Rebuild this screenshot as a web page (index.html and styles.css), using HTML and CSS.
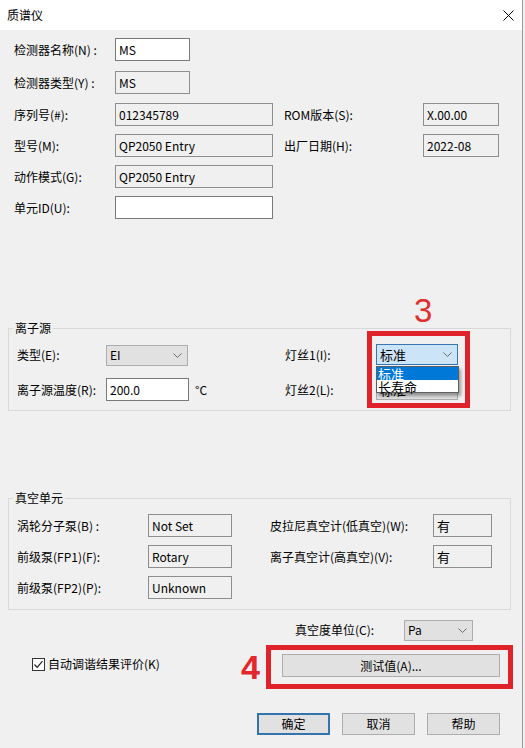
FILE: index.html
```html
<!DOCTYPE html>
<html lang="zh-CN">
<head>
<meta charset="utf-8">
<title>质谱仪</title>
<link rel="stylesheet" href="styles.css">
</head>
<body>
<div class="window">
  <div class="titlebar">
    <span class="title">质谱仪</span>
    <svg class="close" width="11" height="11" viewBox="0 0 11 11"><path d="M0.5 0.5L10.5 10.5M10.5 0.5L0.5 10.5" stroke="#000" stroke-width="1" fill="none"/></svg>
  </div>

  <div class="info">
    <div class="row r1">
      <span class="lbl">检测器名称(N) :</span>
      <span class="box edit w75">MS</span>
    </div>
    <div class="row r2">
      <span class="lbl">检测器类型(Y) :</span>
      <span class="box w75">MS</span>
    </div>
    <div class="row r3">
      <span class="lbl">序列号(#):</span>
      <span class="box w158">012345789</span>
      <span class="lbl2">ROM版本(S):</span>
      <span class="box w76">X.00.00</span>
    </div>
    <div class="row r4">
      <span class="lbl">型号(M):</span>
      <span class="box w158">QP2050 Entry</span>
      <span class="lbl2">出厂日期(H):</span>
      <span class="box w76">2022-08</span>
    </div>
    <div class="row r5">
      <span class="lbl">动作模式(G):</span>
      <span class="box w158">QP2050 Entry</span>
    </div>
    <div class="row r6">
      <span class="lbl">单元ID(U):</span>
      <span class="box edit w158"></span>
    </div>
  </div>

  <fieldset class="group ion">
    <legend>离子源</legend>
    <div class="ion-grid">
      <span>类型(E):</span>
      <div class="combo w82">
        <span>EI</span>
        <svg class="chev" width="9" height="5" viewBox="0 0 9 5"><path d="M0.5 0.5L4.5 4.5L8.5 0.5" stroke="#6b6b6b" fill="none"/></svg>
      </div>
      <span></span>
      <span>灯丝1(I):</span>
      <div class="combo-wrap">
        <div class="combo focus">
          <span class="big">标准</span>
          <svg class="chev" width="9" height="5" viewBox="0 0 9 5"><path d="M0.5 0.5L4.5 4.5L8.5 0.5" stroke="#6b6b6b" fill="none"/></svg>
        </div>
        <ul class="dropdown">
          <li class="sel">标准</li>
          <li>长寿命</li>
        </ul>
      </div>

      <span>离子源温度(R):</span>
      <span class="box edit w83">200.0</span>
      <span class="unit">°C</span>
      <span>灯丝2(L):</span>
      <div class="combo">
        <span class="big">标准</span>
        <svg class="chev" width="9" height="5" viewBox="0 0 9 5"><path d="M0.5 0.5L4.5 4.5L8.5 0.5" stroke="#6b6b6b" fill="none"/></svg>
      </div>
    </div>
  </fieldset>

  <fieldset class="group vac">
    <legend>真空单元</legend>
    <div class="vac-grid">
      <span>涡轮分子泵(B) :</span>
      <span class="box">Not Set</span>
      <span></span>
      <span>皮拉尼真空计(低真空)(W):</span>
      <span class="box big">有</span>

      <span>前级泵(FP1)(F):</span>
      <span class="box">Rotary</span>
      <span></span>
      <span>离子真空计(高真空)(V):</span>
      <span class="box big">有</span>

      <span>前级泵(FP2)(P):</span>
      <span class="box">Unknown</span>
    </div>
  </fieldset>

  <div class="unit-row">
    <span class="unit-lbl">真空度单位(C):</span>
    <div class="combo w69">
      <span>Pa</span>
      <svg class="chev" width="9" height="5" viewBox="0 0 9 5"><path d="M0.5 0.5L4.5 4.5L8.5 0.5" stroke="#6b6b6b" fill="none"/></svg>
    </div>
  </div>

  <div class="action-row">
    <label class="checkline">
      <span class="check"><svg width="11" height="11" viewBox="0 0 11 11"><path d="M1.5 5.5L4.2 8.3L9.5 2.2" stroke="#222" stroke-width="1.2" fill="none"/></svg></span>
      <span>自动调谐结果评价(K)</span>
    </label>
    <span class="btn wide">测试值(A)...</span>
  </div>

  <div class="button-row">
    <span class="btn default">确定</span>
    <span class="btn">取消</span>
    <span class="btn">帮助</span>
  </div>

  <div class="mark mark3"></div>
  <span class="num num3">3</span>
  <div class="mark mark4"></div>
  <span class="num num4">4</span>
</div>
</body>
</html>
```

FILE: styles.css
```css
* { box-sizing: border-box; }

html, body {
  margin: 0;
  background: #f0f0f0;
}

body {
  font-family: "Noto Sans CJK SC", "Microsoft YaHei", sans-serif;
  font-size: 12px;
  line-height: 16px;
  color: #000;
}

.window {
  position: relative;
  width: 523px;
  height: 748px;
  background: #f0f0f0;
  border-right: 1px solid #9a9a9a;
  overflow: hidden;
}

.titlebar {
  height: 30px;
  background: #fff;
  display: flex;
  align-items: center;
  justify-content: space-between;
  padding: 0 8px 0 7px;
}

.close { display: block; margin-top: 1px; }

/* top info rows */
.info {
  display: flex;
  flex-direction: column;
  padding-left: 14px;
}
.row {
  display: flex;
  align-items: center;
  height: 23px;
  white-space: nowrap;
}
.r1 { margin-top: 8px; }
.r2 { margin-top: 10px; }
.r3 { margin-top: 9px; }
.r4, .r5, .r6 { margin-top: 8px; }

.lbl { width: 101px; flex: none; }
.lbl2 { width: 150px; flex: none; padding-left: 11px; }

.box {
  display: block;
  height: 23px;
  border: 1px solid #8e8e8e;
  background: #f0f0f0;
  padding: 0 3px;
  line-height: 21px;
  white-space: nowrap;
  overflow: hidden;
}
.box.edit { background: #fff; border-color: #7a7a7a; }
.w75 { width: 75px; }
.w76 { width: 76px; }
.w158 { width: 158px; }
.w83 { width: 83px; }
.w82 { width: 82px; }
.w69 { width: 69px; }
.big { font-size: 13px; }

/* group boxes */
.group {
  margin: 0 11px 0 8px;
  border: 1px solid #d9d9d9;
  padding: 8px 8px 9px 8px;
  min-width: 0;
}
.group legend {
  padding: 0 2px;
  margin-left: -4px;
  line-height: 16px;
}
.ion { margin-top: 101px; }
.vac { margin-top: 79px; padding-bottom: 10px; }

.ion-grid {
  display: grid;
  grid-template-columns: 89px 82px 97px 91px 82px;
  grid-template-rows: 22px 23px;
  row-gap: 12px;
  align-items: center;
  white-space: nowrap;
}
.unit { padding-left: 7px; }

.combo {
  height: 21px;
  border: 1px solid #adadad;
  background: #e1e1e1;
  display: flex;
  align-items: center;
  justify-content: space-between;
  padding: 0 5px 0 3px;
  white-space: nowrap;
}
.combo.focus {
  background: #cce4f7;
  border-color: #3676b3;
}
.combo-wrap {
  position: relative;
  height: 21px;
  align-self: start;
}
.chev { display: block; flex: none; }

.dropdown {
  position: absolute;
  left: 0;
  top: 22px;
  width: 83px;
  margin: 0;
  padding: 0;
  list-style: none;
  background: #fff;
  border: 1px solid #5f5f5f;
  box-shadow: 2px 3px 3px rgba(0, 0, 0, 0.35);
  font-size: 13px;
  line-height: 13px;
  z-index: 2;
}
.dropdown li { height: 13px; padding-left: 1px; white-space: nowrap; }
.dropdown li + li { height: 12px; }
.dropdown li.sel { background: #0078d7; color: #fff; }

.vac-grid {
  display: grid;
  grid-template-columns: 131px 84px 38px 163px 59px;
  grid-template-rows: 23px 23px 23px;
  row-gap: 8px;
  align-items: center;
  white-space: nowrap;
}

/* bottom area */
.unit-row {
  display: flex;
  align-items: center;
  height: 22px;
  margin-top: 9px;
  padding-left: 295px;
}
.unit-lbl { width: 109px; flex: none; }

.action-row {
  display: flex;
  align-items: center;
  height: 23px;
  margin-top: 13px;
  padding-left: 32px;
}
.checkline {
  width: 250px;
  display: flex;
  align-items: center;
  gap: 3px;
  margin-top: -3px;
}
.check {
  width: 13px;
  height: 13px;
  border: 1px solid #333;
  background: #fff;
  display: flex;
  align-items: center;
  justify-content: center;
}
.check svg { display: block; }

.btn {
  display: flex;
  align-items: center;
  justify-content: center;
  width: 73px;
  height: 22px;
  border: 1px solid #adadad;
  background: #e1e1e1;
}
.btn.wide { width: 218px; height: 23px; }
.btn.default { border: 2px solid #3473ad; }

.button-row {
  display: flex;
  gap: 12px;
  margin-top: 36px;
  padding-left: 257px;
}

/* red annotation overlays */
.mark {
  position: absolute;
  border: 5px solid #e0232b;
  pointer-events: none;
}
.mark3 { left: 367px; top: 331px; width: 103px; height: 77px; }
.mark4 { left: 266px; top: 645px; width: 247px; height: 44px; }

.num {
  position: absolute;
  font-family: "Liberation Sans", "DejaVu Sans", sans-serif;
  font-size: 33px;
  line-height: 33px;
  color: #e0302f;
}
.num3 { left: 414px; top: 294px; }
.num4 { left: 241px; top: 650px; font-size: 34px; line-height: 34px; font-weight: bold; color: #e4272c; }
```
